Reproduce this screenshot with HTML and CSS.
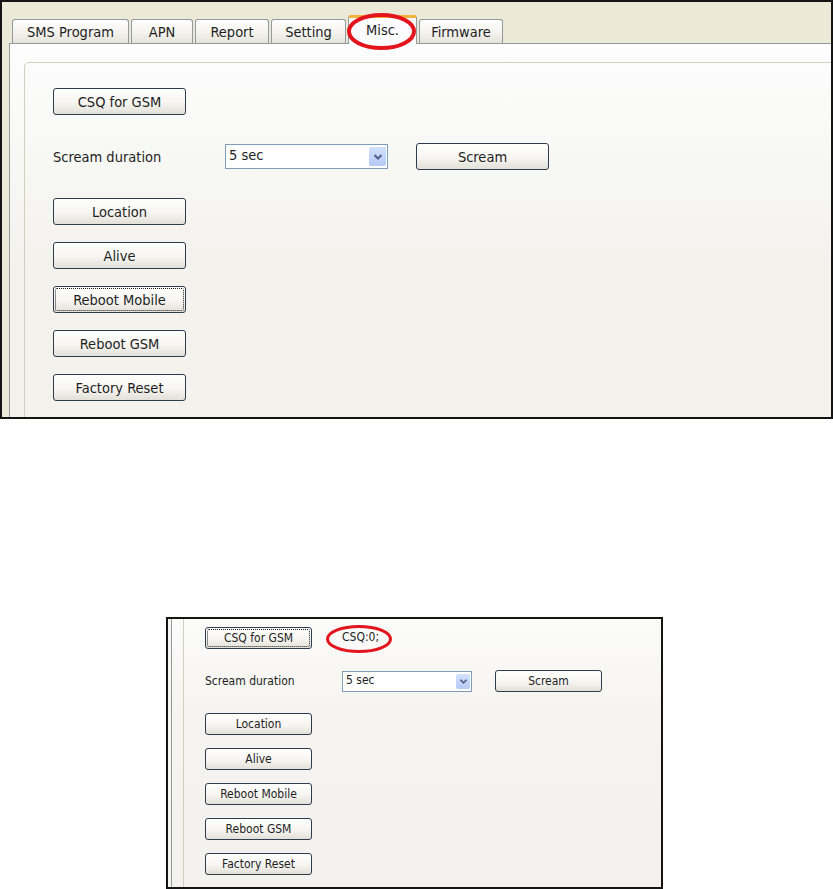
FILE: index.html
```html
<!DOCTYPE html>
<html lang="en">
<head>
<meta charset="utf-8">
<title>Misc. tab</title>
<link rel="stylesheet" href="styles.css">
</head>
<body>
<div class="shot shot-full">
  <div class="tabstrip">
    <div class="tab t-sms">SMS Program</div>
    <div class="tab t-apn">APN</div>
    <div class="tab t-report">Report</div>
    <div class="tab t-setting">Setting</div>
    <div class="tab t-misc active">Misc.</div>
    <div class="tab t-firmware">Firmware</div>
  </div>
  <div class="page">
    <div class="group">
      <div class="controls">
        <button class="btn">CSQ for GSM</button>
        <div class="row">
          <span class="label">Scream duration</span>
          <div class="select">
            <span class="value">5 sec</span>
            <span class="arrow"><svg viewBox="0 0 10 8" width="10" height="8"><path d="M1.5 2 L5 5.5 L8.5 2" fill="none" stroke="#4d6185" stroke-width="2"/></svg></span>
          </div>
          <button class="btn">Scream</button>
        </div>
        <button class="btn">Location</button>
        <button class="btn">Alive</button>
        <button class="btn focus">Reboot Mobile</button>
        <button class="btn">Reboot GSM</button>
        <button class="btn">Factory Reset</button>
      </div>
    </div>
  </div>
  <svg class="ring ring-top" viewBox="0 0 69 37"><ellipse cx="34.5" cy="18.5" rx="32.5" ry="16.5" fill="none" stroke="#e3141c" stroke-width="4"/></svg>
</div>

<div class="shot shot-crop">
  <div class="page-crop">
    <div class="group-crop">
      <div class="controls controls-sm">
        <div class="row-result">
          <button class="btn btn-sm focus">CSQ for GSM</button>
          <span class="result">CSQ:0;</span>
        </div>
        <div class="row row-sm">
          <span class="label label-sm">Scream duration</span>
          <div class="select select-sm">
            <span class="value">5 sec</span>
            <span class="arrow arrow-sm"><svg viewBox="0 0 10 8" width="9" height="7"><path d="M1.5 2 L5 5.5 L8.5 2" fill="none" stroke="#4d6185" stroke-width="2"/></svg></span>
          </div>
          <button class="btn btn-sm">Scream</button>
        </div>
        <button class="btn btn-sm">Location</button>
        <button class="btn btn-sm">Alive</button>
        <button class="btn btn-sm">Reboot Mobile</button>
        <button class="btn btn-sm">Reboot GSM</button>
        <button class="btn btn-sm">Factory Reset</button>
      </div>
    </div>
  </div>
  <svg class="ring ring-bottom" viewBox="0 0 66 28"><ellipse cx="33" cy="14" rx="31.5" ry="12.5" fill="none" stroke="#e3141c" stroke-width="3"/></svg>
</div>
</body>
</html>
```

FILE: styles.css
```css
* { box-sizing: border-box; }

body {
  margin: 0;
  background: #fff;
  font-family: "DejaVu Sans Condensed", "DejaVu Sans", sans-serif;
  font-stretch: condensed;
  color: #1e1e1e;
}

.shot {
  position: relative;
  overflow: hidden;
  border: 2px solid #141414;
}

.shot-full {
  width: 833px;
  height: 419px;
  background: #ece9d8;
  font-size: 14.5px;
}

.shot-crop {
  width: 497px;
  height: 272px;
  margin: 198px 0 0 166px;
  background: #f6f5f1;
  font-size: 12px;
}

/* tabs */
.tabstrip {
  display: flex;
  align-items: flex-end;
  gap: 2px;
  height: 41px;
  padding-left: 10px;
}

.tab {
  height: 24px;
  border: 1px solid #919b9c;
  border-bottom: none;
  border-radius: 3px 3px 0 0;
  background: linear-gradient(#fefefe, #f4f3ee 55%, #e4e2da);
  display: flex;
  align-items: center;
  justify-content: center;
  padding-top: 1px;
}

.t-sms { width: 117px; }
.t-apn { width: 62px; }
.t-report { width: 74px; }
.t-setting { width: 75px; }
.t-misc { width: 69px; }
.t-firmware { width: 84px; }

.tab.active {
  position: relative;
  z-index: 1;
  height: 29px;
  margin-bottom: -1px;
  background: #fcfcfe;
  border-top: 3px solid #f2b33d;
  padding-top: 0;
  padding-bottom: 3px;
}

.page {
  margin: 0 -6px 0 7px;
  height: 400px;
  border: 1px solid #919b9c;
  background: linear-gradient(#fdfdfe, #f7f7f4 120px, #f3f2ed 220px);
  padding: 18px 0 0 14px;
}

.group {
  height: 400px;
  margin-right: -10px;
  border: 1px solid #d0d0bf;
  border-radius: 5px;
  padding: 25px 0 0 28px;
}

.controls {
  display: flex;
  flex-direction: column;
  align-items: flex-start;
  gap: 17px;
}

.btn {
  position: relative;
  width: 133px;
  height: 27px;
  padding: 0;
  border: 1px solid #2d3c4e;
  border-radius: 3px;
  background: linear-gradient(#ffffff, #f6f5f1 55%, #e2e0d7);
  font: inherit;
  color: inherit;
}

.btn.focus::after {
  content: "";
  position: absolute;
  inset: 1px;
  border: 1px dotted #222;
  border-radius: 2px;
}

.row {
  display: flex;
  align-items: center;
  height: 27px;
  margin: 11px 0;
}

.label { width: 172px; }

.select {
  width: 163px;
  height: 25px;
  margin-right: 28px;
  border: 1px solid #7f9db9;
  background: #fff;
  display: flex;
  align-items: center;
  justify-content: space-between;
  padding: 2px 1px 2px 3px;
}

.value { margin-top: -4px; }

.arrow {
  width: 17px;
  height: 100%;
  border-radius: 2px;
  background: linear-gradient(#d3e0fd, #b6caf5);
  display: flex;
  align-items: center;
  justify-content: center;
}

/* cropped second picture */
.page-crop {
  width: 600px;
  height: 100%;
  margin-left: 3px;
  border-left: 1px solid #919b9c;
  padding-left: 11px;
  background: linear-gradient(#fbfbfa, #f5f4f0 90px, #f3f2ee 200px);
}

.group-crop {
  height: 100%;
  border-left: 1px solid #d0d0bf;
  padding: 8px 0 0 21px;
}

.controls-sm { gap: 13px; }

.btn-sm {
  width: 107px;
  height: 22px;
}

.row-result {
  display: flex;
  align-items: center;
  gap: 30px;
}

.result { margin-top: -3px; }

.row-sm {
  height: 22px;
  margin: 8px 0;
}

.label-sm { width: 137px; }

.select-sm {
  width: 130px;
  height: 21px;
  margin-right: 23px;
}

.select-sm .value { margin-top: -2px; }

.arrow-sm { width: 14px; }

/* red annotation rings */
.ring {
  position: absolute;
  z-index: 3;
}

.ring-top {
  left: 345px;
  top: 11px;
  width: 69px;
  height: 37px;
}

.ring-bottom {
  left: 158px;
  top: 6px;
  width: 66px;
  height: 28px;
}
```
